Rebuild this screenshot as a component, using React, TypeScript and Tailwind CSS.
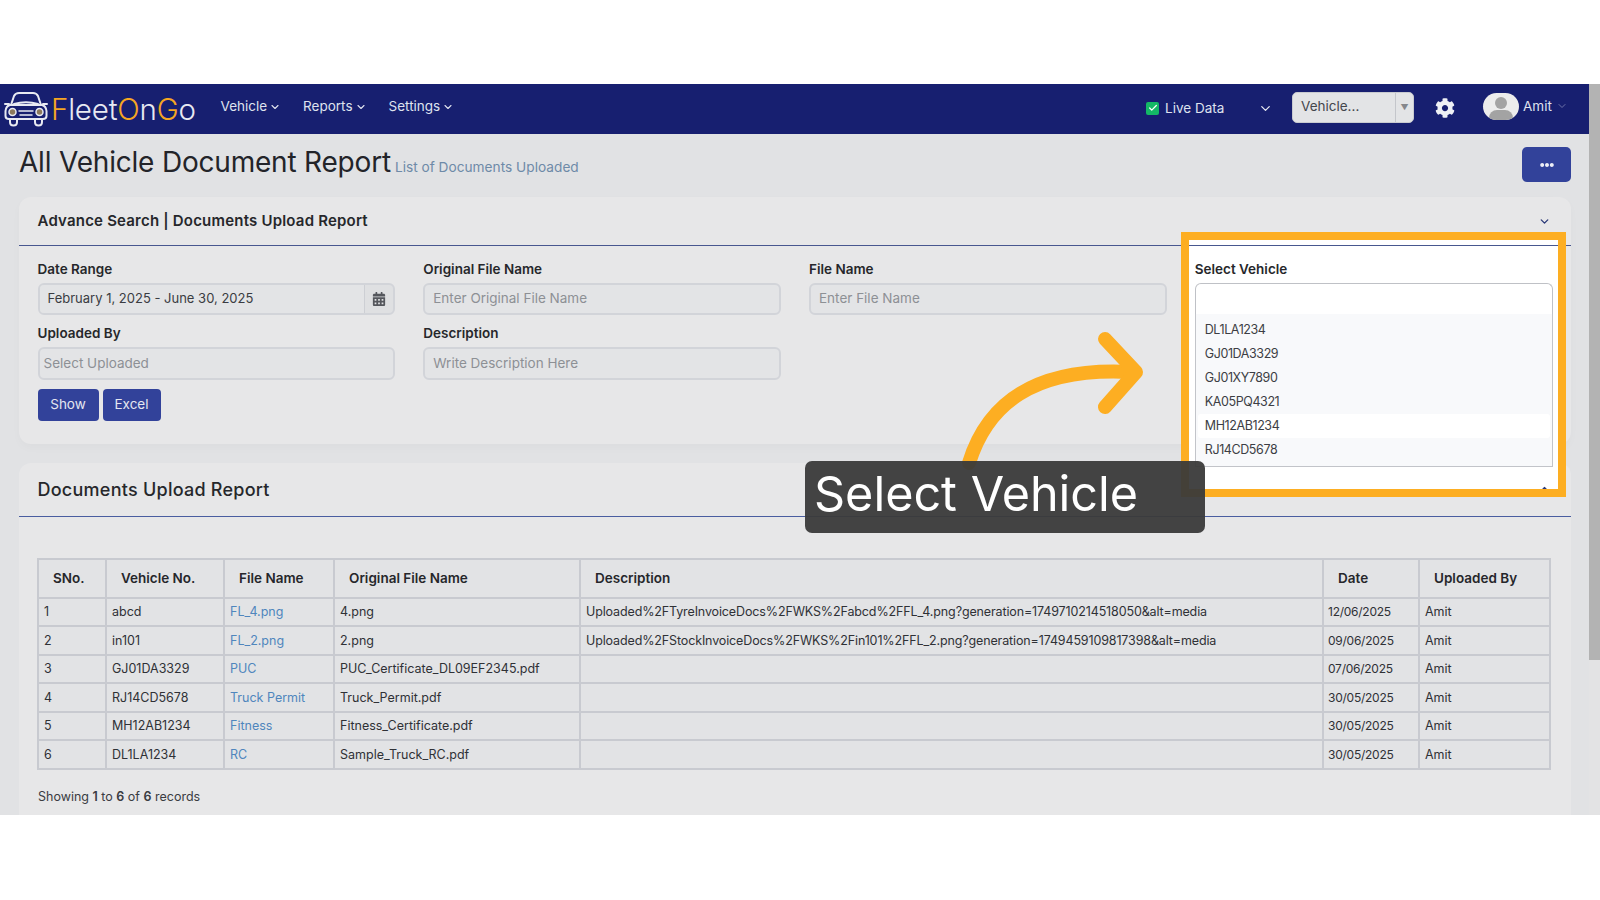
import { Check, ChevronDown, ChevronUp } from "lucide-react";
import { FaCalendarAlt, FaCog, FaEllipsisH } from "react-icons/fa";

const rows = [
  ["1", "abcd", "FL_4.png", "4.png", "Uploaded%2FTyreInvoiceDocs%2FWKS%2Fabcd%2FFL_4.png?generation=1749710214518050&alt=media", "12/06/2025"],
  ["2", "in101", "FL_2.png", "2.png", "Uploaded%2FStockInvoiceDocs%2FWKS%2Fin101%2FFL_2.png?generation=1749459109817398&alt=media", "09/06/2025"],
  ["3", "GJ01DA3329", "PUC", "PUC_Certificate_DL09EF2345.pdf", "", "07/06/2025"],
  ["4", "RJ14CD5678", "Truck Permit", "Truck_Permit.pdf", "", "30/05/2025"],
  ["5", "MH12AB1234", "Fitness", "Fitness_Certificate.pdf", "", "30/05/2025"],
  ["6", "DL1LA1234", "RC", "Sample_Truck_RC.pdf", "", "30/05/2025"],
];
const heads = ["SNo.", "Vehicle No.", "File Name", "Original File Name", "Description", "Date", "Uploaded By"];
const vehicles = ["DL1LA1234", "GJ01DA3329", "GJ01XY7890", "KA05PQ4321", "MH12AB1234", "RJ14CD5678"];

function Logo() {
  return (
    <svg width="46" height="36" viewBox="0 0 46 36" fill="none" stroke="#e8eaf2" strokeWidth="2" strokeLinecap="round" strokeLinejoin="round" className="shrink-0">
      <path d="M8 14 L11 5 Q12.5 2 16 2 H30 Q33.500 2 35 5 L38 14" />
      <path d="M11 13 Q23 9.500 35 13" />
      <path d="M7 14 H39 Q43 15 43.500 20 V25 Q43.500 28 40 28 H6 Q2.500 28 2.500 25 V20 Q3 15 7 14 Z" />
      <path d="M7 28 V31 Q7 34.500 10.500 34.500 Q14 34.500 14 31 V28" />
      <path d="M32 28 V31 Q32 34.500 35.500 34.500 Q39 34.500 39 31 V28" />
      <path d="M6 13 H2 M40 13 H44" />
      <circle cx="9.500" cy="21" r="3.500" fill="#8d7a5c" strokeWidth="1.500" />
      <circle cx="36.500" cy="21" r="3.500" fill="#8d7a5c" strokeWidth="1.500" />
      <path d="M16 20 H30 M17 24 H29" strokeWidth="1.500" />
    </svg>
  );
}

function NavItem({ label }: { label: string }) {
  return (
    <div className="flex items-center gap-[2px] text-[13.500px] text-[#dfe2ee]">
      {label}
      <ChevronDown size={12} strokeWidth={2.2} />
    </div>
  );
}

function Field({ label, placeholder, tall, pad }: { label: string; placeholder: string; tall?: boolean; pad?: boolean }) {
  return (
    <div>
      <div className="h-[24px] text-[13.500px] leading-[20px] font-semibold text-[#26272b]">{label}</div>
      <div className={`flex items-center rounded-[6px] border-2 border-[#d2d4d9] bg-[#e3e4e6] pb-[1px] text-[13.500px] text-[#8d9095] ${tall ? "h-[33px]" : "h-[32px]"} ${pad ? "pl-[4px]" : "pl-[8px]"}`}>
        {placeholder}
      </div>
    </div>
  );
}

export default function App() {
  return (
    <div className="relative h-[900px] w-[1600px] overflow-hidden bg-white text-[#2f3136] [font-family:Inter,'Liberation_Sans',sans-serif]">
      <div className="h-[84px]" />
      <div className="flex h-[731px] overflow-hidden">
        <div className="w-[1589px] bg-[#e1e2e4]">
          {/* Navbar */}
          <div className="flex h-[50px] items-center bg-[#171f70] pl-[3px] pr-[21px]">
            <Logo />
            <div className="ml-[2px] w-[169.500px] text-[29.500px] leading-[36px] font-light tracking-[-0.2px] text-[#e8eaf2]">
              <span className="text-[#f5a623]">F</span>leet<span className="text-[#f5a623]">O</span>n<span className="text-[#f5a623]">G</span>o
            </div>
            <div className="flex gap-[22px] pb-[5px]">
              <NavItem label="Vehicle" />
              <NavItem label="Reports" />
              <NavItem label="Settings" />
            </div>
            <div className="ml-auto flex items-center pb-[2px]">
              <span className="flex h-[13px] w-[13px] items-center justify-center rounded-[2px] bg-[#14b866] text-white">
                <Check size={10} strokeWidth={3} />
              </span>
              <span className="ml-[6px] w-[59px] whitespace-nowrap text-[13.500px] text-[#dfe2ee]">Live Data</span>
              <ChevronDown size={15} strokeWidth={2} className="ml-[34px] text-[#e8eaf2]" />
            </div>
            <div className="mb-[4px] ml-[19px] flex h-[31px] w-[122px] items-stretch rounded-[5px] border border-[#c9cbd0] bg-[#e3e4e6] text-[13.500px] text-[#44464c]">
              <div className="flex flex-1 items-center border-r border-[#c4c6cb] pb-[2px] pl-[8px]">Vehicle...</div>
              <div className="flex w-[17px] items-center justify-center text-[8px] text-[#85878c]">▼</div>
            </div>
            <FaCog size={20} className="mb-[2px] ml-[21px] text-[#eef0f5]" />
            <div className="relative mb-[6px] ml-[28px] h-[27px] w-[36px] overflow-hidden rounded-full bg-[#ececec]">
              <div className="absolute left-[12px] top-[4px] h-[12px] w-[12px] rounded-full bg-[#a3a3a3]" />
              <div className="absolute left-[6px] top-[17px] h-[14px] w-[24px] rounded-t-[8px] bg-[#a3a3a3]" />
            </div>
            <span className="ml-[4px] w-[29px] pb-[6px] text-[13.500px] text-[#dfe2ee]">Amit</span>
            <ChevronDown size={12} className="mb-[6px] ml-[4px] text-[#6d72a8]" />
          </div>

          <div className="pl-[19px] pr-[18px]">
            {/* Title */}
            <div className="flex h-[63px] items-start">
              <h1 className="mt-[9px] text-[28px] leading-[38px] font-normal tracking-[-0.2px] text-[#232429]">All Vehicle Document Report</h1>
              <span className="ml-[4px] mt-[24px] text-[13.700px] leading-[18px] text-[#6e8aa8]">List of Documents Uploaded</span>
              <button className="ml-auto mt-[13px] flex h-[35px] w-[49px] items-center justify-center rounded-[5px] bg-[#32429a] text-[#eceef6]">
                <FaEllipsisH size={14} />
              </button>
            </div>

            {/* Search card */}
            <div className="h-[247px] rounded-[12px] bg-[#e7e7e8] shadow-[0_4px_10px_rgba(0,0,0,0.025)]">
              <div className="flex h-[49px] items-center justify-between border-b border-[#48578f] pl-[18.500px] pr-[20px] pt-[1px]">
                <span className="text-[15px] font-semibold tracking-[0.2px] text-[#26272b]">Advance Search | Documents Upload Report</span>
                <ChevronDown size={13} strokeWidth={2.5} className="text-[#2b3a78]" />
              </div>
              <div className="px-[18.500px] pt-[13px]">
                <div className="grid grid-cols-4 gap-x-[28px]">
                  <div className="flex flex-col gap-[8px]">
                    <div>
                      <div className="h-[24px] text-[13.500px] leading-[20px] font-semibold text-[#26272b]">Date Range</div>
                      <div className="flex h-[32px] overflow-hidden rounded-[6px] border-2 border-[#d2d4d9] bg-[#dfe0e2]">
                        <div className="flex flex-1 items-center border-r border-[#cdcfd4] bg-[#e3e4e6] pl-[8px] text-[13px] text-[#3a3c42]">February 1, 2025 - June 30, 2025</div>
                        <div className="flex w-[28px] items-center justify-center text-[#55575d]">
                          <FaCalendarAlt size={14} />
                        </div>
                      </div>
                    </div>
                    <Field label="Uploaded By" placeholder="Select Uploaded" tall pad />
                  </div>
                  <div className="flex flex-col gap-[8px]">
                    <Field label="Original File Name" placeholder="Enter Original File Name" />
                    <Field label="Description" placeholder="Write Description Here" tall />
                  </div>
                  <div>
                    <Field label="File Name" placeholder="Enter File Name" />
                  </div>
                  <div className="relative z-20">
                    <div className="h-[24px] text-[13.500px] leading-[20px] font-semibold text-[#26272b]">Select Vehicle</div>
                    <div className="h-[32px] rounded-t-[6px] border border-b-0 border-[#bfc1c6] bg-white" />
                    <div className="absolute inset-x-0 top-[55px] flex h-[153px] flex-col border-x border-b border-[#c2c4c9] bg-[#f8f9fb] pt-[4px] text-[12.500px] tracking-[-0.4px] text-[#3c3e44]">
                      {vehicles.map((v, i) => (
                        <div key={v} className={`flex h-[24px] shrink-0 items-center ${i === 4 ? "mx-[2px] rounded-[3px] bg-white pl-[7px]" : "pl-[9px]"}`}>{v}</div>
                      ))}
                    </div>
                  </div>
                </div>
                <div className="mt-[9px] flex gap-[4px] text-[13.500px] text-[#e4e6f0]">
                  <button className="h-[32px] w-[61px] rounded-[4px] bg-[#32429a] pb-[2px]">Show</button>
                  <button className="h-[32px] w-[58px] rounded-[4px] bg-[#32429a] pb-[2px]">Excel</button>
                </div>
              </div>
            </div>

            {/* Table card */}
            <div className="mt-[19px] h-[360px] rounded-t-[12px] bg-[#e7e7e8]">
              <div className="flex h-[53.500px] items-center border-b border-[#4a5ea0] pl-[18.500px]">
                <span className="text-[18px] font-medium tracking-[0.25px] text-[#26272b]">Documents Upload Report</span>
              </div>
              <div className="pl-[18px] pr-[18px] pt-[41px]">
                <table className="w-[1512px] table-fixed border-collapse bg-[#e2e3e5] text-[12.500px]">
                  <colgroup>
                    <col className="w-[68px]" />
                    <col className="w-[118px]" />
                    <col className="w-[110px]" />
                    <col className="w-[246px]" />
                    <col className="w-[743px]" />
                    <col className="w-[96px]" />
                    <col className="w-[131px]" />
                  </colgroup>
                  <thead>
                    <tr className="h-[39px]">
                      {heads.map((h) => (
                        <th key={h} className="border-2 border-[#c8cad0] pl-[14px] text-left text-[13.500px] font-semibold text-[#26272b]">{h}</th>
                      ))}
                    </tr>
                  </thead>
                  <tbody>
                    {rows.map((r) => (
                      <tr key={r[0]} className="h-[28.500px]">
                        <td className="border-2 border-[#c8cad0] pl-[5px] pt-[2px]">{r[0]}</td>
                        <td className="border-2 border-[#c8cad0] pl-[5px] pt-[2px]">{r[1]}</td>
                        <td className="border-2 border-[#c8cad0] pl-[5px] pt-[2px] text-[#4f86bd]">{r[2]}</td>
                        <td className="border-2 border-[#c8cad0] pl-[5px] pt-[2px]">{r[3]}</td>
                        <td className="border-2 border-[#c8cad0] pl-[5px] pt-[2px] tracking-[-0.13px] whitespace-nowrap">{r[4]}</td>
                        <td className="border-2 border-[#c8cad0] pl-[4px] pt-[1px] text-[12px] tracking-[-0.25px]">{r[5]}</td>
                        <td className="border-2 border-[#c8cad0] pl-[5px] pt-[2px]">Amit</td>
                      </tr>
                    ))}
                  </tbody>
                </table>
                <div className="mt-[17px] pl-[1px] text-[12.500px] leading-[20px] text-[#3a3c42]">
                  Showing <b className="font-semibold">1</b> to <b className="font-semibold">6</b> of <b className="font-semibold">6</b> records
                </div>
              </div>
            </div>
          </div>
        </div>
        {/* Scrollbar */}
        <div className="flex w-[11px] flex-col bg-[#e3e3e4]">
          <div className="h-[576px] bg-[#b3b3b3]" />
        </div>
      </div>

      {/* Highlight box */}
      <div className="absolute left-[1181px] top-[232px] z-10 h-[265px] w-[385px] overflow-hidden border-8 border-[#fdae22] bg-white">
        <div className="mt-[5px] h-px bg-[#48578f]" />
        <ChevronUp size={9} strokeWidth={3} className="absolute bottom-[-4px] left-[351px] text-[#2b3a78]" />
      </div>

      {/* Arrow */}
      <svg className="absolute left-[952px] top-[325px] z-20" width="205" height="145" viewBox="0 0 205 145" fill="none" stroke="#fdae22" strokeWidth="14" strokeLinecap="round" strokeLinejoin="round">
        <path d="M17 138 C 35 80 80 42 178 47" />
        <path d="M153 14 L184 47 L153 82" />
      </svg>

      {/* Caption */}
      <div className="absolute left-[805px] top-[461px] z-30 flex h-[72px] w-[400px] items-center rounded-[7px] bg-[#3a3a3a]/95 pb-[6px] pl-[9px] text-[48.500px] leading-none text-white">
        Select Vehicle
      </div>
    </div>
  );
}
